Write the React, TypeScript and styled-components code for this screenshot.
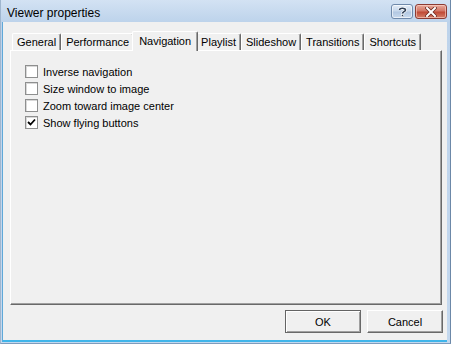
import React from 'react';
import styled, { createGlobalStyle } from 'styled-components';

const Global = createGlobalStyle`
	html, body {
		margin: 0;
		padding: 0;
		background: #bfd5ec;
	}
	* {
		box-sizing: border-box;
	}
`;

const Window = styled.div`
	display: flex;
	flex-direction: column;
	width: 451px;
	height: 344px;
	background: linear-gradient(#d3e2f3 0px, #bdd3eb 22px, #c4d8ee 100%);
	border-right: 1px solid #6c88a8;
	border-left: 1px solid #9fb6cf;
	border-bottom: 1px solid #7d9cbd;
	font-family: "Liberation Sans", Arial, sans-serif;
	font-size: 11px;
	color: #000;
	overflow: hidden;
`;

const TitleBar = styled.div`
	display: flex;
	align-items: center;
	height: 22px;
	padding: 0 3px 0 6px;
	flex-shrink: 0;
`;

const Title = styled.div`
	flex: 1;
	font-size: 12px;
	color: #000;
	padding-top: 3px;
`;

const CaptionButtons = styled.div`
	display: flex;
	gap: 2px;
	align-self: flex-start;
	margin-top: 4px;
`;

const CaptionButton = styled.div<{ $close?: boolean }>`
	display: flex;
	align-items: center;
	justify-content: center;
	width: ${p => (p.$close ? '32px' : '22px')};
	height: 15px;
	border-radius: 3px;
	border: 1px solid ${p => (p.$close ? '#8c3b33' : '#6f89aa')};
	background: ${p =>
		p.$close
			? 'linear-gradient(#e9a99c 0%, #d27766 45%, #c04a36 55%, #d5806a 100%)'
			: 'linear-gradient(#e3ecf7 0%, #c8d8ec 45%, #b3c8e2 55%, #c9daee 100%)'};
	box-shadow: inset 0 0 0 1px ${p => (p.$close ? 'rgba(255,220,210,0.55)' : 'rgba(255,255,255,0.6)')};
`;

const Client = styled.div`
	display: flex;
	flex-direction: column;
	flex: 1;
	margin: 0 3px 1px 1px;
	background: #f0f0f0;
	border-bottom: 2px solid #3fb5ea;
	border-left: 1px solid #5fa8d8;
`;

const TabArea = styled.div`
	display: flex;
	flex-direction: column;
	padding: 9px 5px 0 7px;
`;

const TabStrip = styled.div`
	display: flex;
	align-items: flex-end;
	height: 19px;
	padding-left: 2px;
	position: relative;
	z-index: 1;
`;

const Tab = styled.div<{ $active?: boolean }>`
	display: flex;
	align-items: center;
	height: ${p => (p.$active ? '20px' : '17px')};
	padding: ${p => (p.$active ? '0 6px 1px 6px' : '0 4px')};
	margin: ${p => (p.$active ? '0 -2px -1px -2px' : '0')};
	background: #f0f0f0;
	border-top: 1px solid #fff;
	border-left: 1px solid #fff;
	border-right: 1px solid #696969;
	box-shadow: inset -1px 0 0 #a0a0a0;
	border-radius: 2px 2px 0 0;
	white-space: nowrap;
	position: relative;
	z-index: ${p => (p.$active ? 2 : 1)};
`;

const Panel = styled.div`
	display: flex;
	flex-direction: column;
	height: 255px;
	padding: 12px 14px;
	border-top: 1px solid #fff;
	border-left: 1px solid #fff;
	border-right: 1px solid #696969;
	border-bottom: 1px solid #696969;
	box-shadow: inset -1px -1px 0 #a0a0a0;
`;

const OptionRow = styled.label`
	display: flex;
	align-items: center;
	height: 17px;
	gap: 5px;
`;

const Box = styled.span`
	display: flex;
	align-items: center;
	justify-content: center;
	width: 13px;
	height: 13px;
	background: #fff;
	border: 1px solid #8e8f8f;
	box-shadow: inset 1px 1px 0 #d8d8d8;
`;

const Footer = styled.div`
	display: flex;
	justify-content: flex-end;
	gap: 6px;
	padding: 5px 4px 7px 0;
`;

const Button = styled.div<{ $default?: boolean }>`
	display: flex;
	align-items: center;
	justify-content: center;
	width: 76px;
	height: 23px;
	background: #f0f0f0;
	border: 1px solid ${p => (p.$default ? '#646464' : '#fff')};
	border-right-color: #696969;
	border-bottom-color: #696969;
	box-shadow: ${p =>
		p.$default
			? 'inset 1px 1px 0 #fff, inset -1px -1px 0 #a0a0a0'
			: 'inset -1px -1px 0 #a0a0a0'};
`;

const options = [
	{ label: 'Inverse navigation', checked: false },
	{ label: 'Size window to image', checked: false },
	{ label: 'Zoom toward image center', checked: false },
	{ label: 'Show flying buttons', checked: true },
];

const tabs = ['General', 'Performance', 'Navigation', 'Playlist', 'Slideshow', 'Transitions', 'Shortcuts'];

export default function App() {
	return (
		<>
			<Global />
			<Window>
				<TitleBar>
					<Title>Viewer properties</Title>
					<CaptionButtons>
						<CaptionButton>
							<svg width="9" height="10" viewBox="0 0 9 10">
								<path d="M1.5 3 C1.5 0.8 7.5 0.6 7.5 3 C7.5 4.6 4.5 4.8 4.5 6.5" fill="none" stroke="#fff" strokeWidth="3" />
								<path d="M1.5 3 C1.5 0.8 7.5 0.6 7.5 3 C7.5 4.6 4.5 4.8 4.5 6.5" fill="none" stroke="#2f3f56" strokeWidth="1.6" />
								<rect x="3.5" y="7.6" width="2" height="2" fill="#2f3f56" stroke="#fff" strokeWidth="0.6" />
							</svg>
						</CaptionButton>
						<CaptionButton $close>
							<svg width="12" height="10" viewBox="0 0 12 10">
								<path d="M2 1 L10 9 M10 1 L2 9" stroke="#6d2a22" strokeWidth="3.6" strokeLinecap="square" />
								<path d="M2 1 L10 9 M10 1 L2 9" stroke="#fff" strokeWidth="2" strokeLinecap="square" />
							</svg>
						</CaptionButton>
					</CaptionButtons>
				</TitleBar>
				<Client>
					<TabArea>
						<TabStrip>
							{tabs.map(t => (
								<Tab key={t} $active={t === 'Navigation'}>{t}</Tab>
							))}
						</TabStrip>
						<Panel>
							{options.map(o => (
								<OptionRow key={o.label}>
									<Box>
										{o.checked && (
											<svg width="9" height="9" viewBox="0 0 9 9">
												<path d="M1 4 L3.5 6.5 L8 1.5" fill="none" stroke="#000" strokeWidth="1.8" />
											</svg>
										)}
									</Box>
									{o.label}
								</OptionRow>
							))}
						</Panel>
					</TabArea>
					<Footer>
						<Button $default>OK</Button>
						<Button>Cancel</Button>
					</Footer>
				</Client>
			</Window>
		</>
	);
}
